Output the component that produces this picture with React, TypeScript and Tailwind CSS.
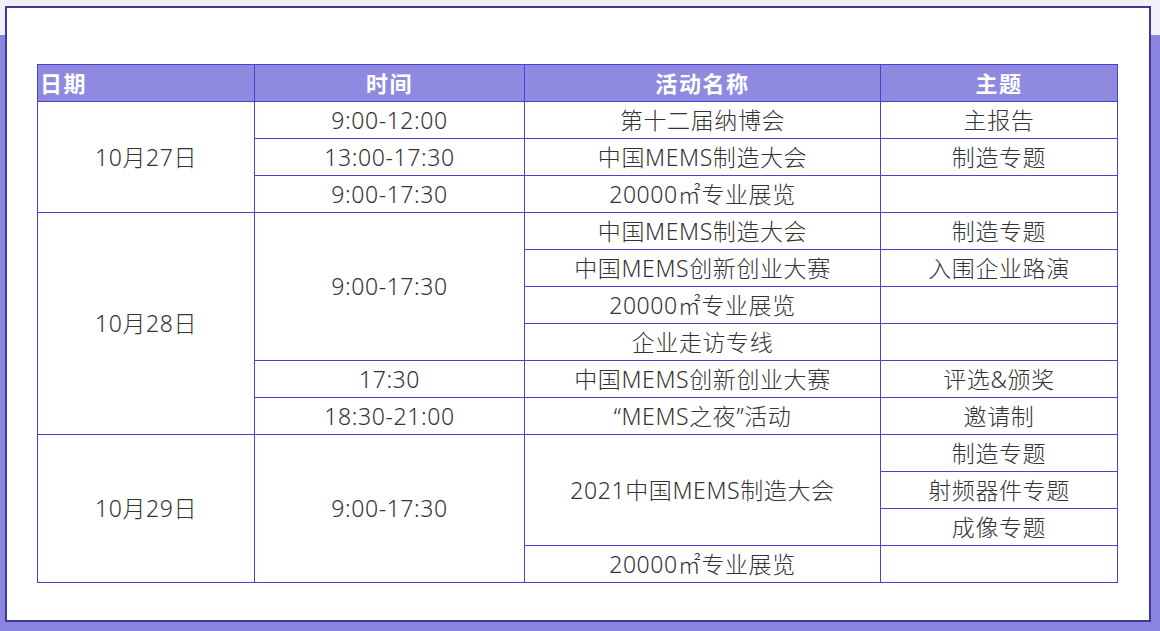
const rows: { date?: [string, number]; time?: [string, number]; name?: [string, number]; topic: string }[] = [
  { date: ["10月27日", 3], time: ["9:00-12:00", 1], name: ["第十二届纳博会", 1], topic: "主报告" },
  { time: ["13:00-17:30", 1], name: ["中国MEMS制造大会", 1], topic: "制造专题" },
  { time: ["9:00-17:30", 1], name: ["20000㎡专业展览", 1], topic: "" },
  { date: ["10月28日", 6], time: ["9:00-17:30", 4], name: ["中国MEMS制造大会", 1], topic: "制造专题" },
  { name: ["中国MEMS创新创业大赛", 1], topic: "入围企业路演" },
  { name: ["20000㎡专业展览", 1], topic: "" },
  { name: ["企业走访专线", 1], topic: "" },
  { time: ["17:30", 1], name: ["中国MEMS创新创业大赛", 1], topic: "评选&颁奖" },
  { time: ["18:30-21:00", 1], name: ["“MEMS之夜”活动", 1], topic: "邀请制" },
  { date: ["10月29日", 4], time: ["9:00-17:30", 4], name: ["2021中国MEMS制造大会", 3], topic: "制造专题" },
  { topic: "射频器件专题" },
  { topic: "成像专题" },
  { name: ["20000㎡专业展览", 1], topic: "" },
];

const cell = "border border-[#4b40d4] text-center align-middle p-0";

export default function App() {
  return (
    <div className="min-h-screen bg-[linear-gradient(to_bottom,#f1effa_35px,#8a84e0_35px)] pt-[6px] pl-[5px] font-['Noto_Sans','Noto_Sans_CJK_SC',sans-serif]">
      <div className="w-[1146px] h-[616px] border-2 border-[#3c3a94] bg-white pt-[56px] pl-[30px]">
        <table className="border-collapse table-fixed w-[1080px] text-[23px] tracking-[0.6px] font-light text-[#333] leading-none">
          <colgroup>
            <col className="w-[217px]" />
            <col className="w-[270px]" />
            <col className="w-[356px]" />
            <col className="w-[237px]" />
          </colgroup>
          <thead>
            <tr className="h-[37px] bg-[#8f8ae0] text-white font-bold text-[22px] tracking-[1.6px]">
              <th className={`${cell} !text-left pl-[2px]`}>日期</th>
              <th className={cell}>时间</th>
              <th className={cell}>活动名称</th>
              <th className={cell}>主题</th>
            </tr>
          </thead>
          <tbody>
            {rows.map((r, i) => (
              <tr key={i} className="h-[37px]">
                {r.date && (
                  <td rowSpan={r.date[1]} className={cell}>
                    {r.date[0]}
                  </td>
                )}
                {r.time && (
                  <td rowSpan={r.time[1]} className={cell}>
                    {r.time[0]}
                  </td>
                )}
                {r.name && (
                  <td rowSpan={r.name[1]} className={cell}>
                    {r.name[0]}
                  </td>
                )}
                <td className={cell}>{r.topic}</td>
              </tr>
            ))}
          </tbody>
        </table>
      </div>
    </div>
  );
}
